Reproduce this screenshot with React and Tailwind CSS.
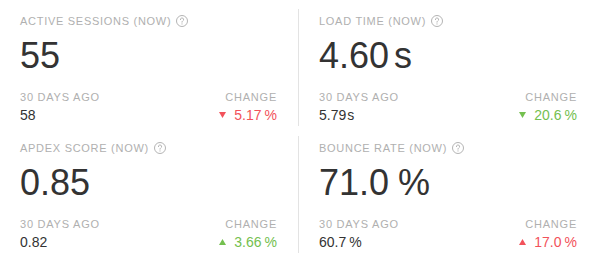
const metrics = [
  { label: 'Active Sessions (now)', value: '55', unit: null, prev: '58', prevUnit: null, change: '5.17', dir: 'down', good: false },
  { label: 'Load Time (now)', value: '4.60', unit: 's', prev: '5.79', prevUnit: 's', change: '20.6', dir: 'down', good: true },
  { label: 'Apdex Score (now)', value: '0.85', unit: null, prev: '0.82', prevUnit: null, change: '3.66', dir: 'up', good: true },
  { label: 'Bounce Rate (now)', value: '71.0', unit: '%', prev: '60.7', prevUnit: '%', change: '17.0', dir: 'up', good: false },
];

function HelpIcon() {
  return (
    <svg width="12" height="12" viewBox="0 0 12 12" fill="none" stroke="#b4b4b4" strokeWidth="1">
      <circle cx="6" cy="6" r="5.5" />
      <path d="M4.4 4.6a1.6 1.6 0 1 1 2.3 1.4c-.5.3-.7.6-.7 1.2" strokeLinecap="round" />
      <circle cx="6" cy="8.9" r="0.55" fill="#b4b4b4" stroke="none" />
    </svg>
  );
}

function Triangle({ dir, color }) {
  return (
    <svg width="7" height="6" viewBox="0 0 7 6" className="mr-[8px]">
      {dir === 'down'
        ? <polygon points="0,0 7,0 3.5,6" fill={color} />
        : <polygon points="0,6 7,6 3.5,0" fill={color} />}
    </svg>
  );
}

function MetricCell({ m, divider }) {
  const color = m.good ? '#74c04f' : '#f2525b';
  return (
    <div className={`flex flex-col pt-[5px] pl-5 pr-[21px] ${divider ? 'border-r border-[#e3e3e3]' : ''}`}>
      <div className="flex items-center gap-[5px] h-[14px]">
        <span className="text-[11px] leading-[14px] uppercase tracking-[0.065em] text-[#b0b0b0]">{m.label}</span>
        <HelpIcon />
      </div>
      <div className="mt-[8px] text-[36px] leading-[40px] text-[#333333]">
        {m.value}
        {m.unit && <span className={m.unit === '%' ? 'ml-[9px]' : 'ml-[5px]'}>{m.unit}</span>}
      </div>
      <div className="mt-[14px] flex justify-between">
        <div className="flex flex-col">
          <span className="text-[11px] leading-[14px] uppercase tracking-[0.07em] text-[#b0b0b0]">30 days ago</span>
          <span className="mt-[3px] text-[14px] leading-[16px] text-[#333333]">
            {m.prev}
            {m.prevUnit && <span className={m.prevUnit === '%' ? 'ml-[3px]' : 'ml-[1px]'}>{m.prevUnit}</span>}
          </span>
        </div>
        <div className="flex flex-col items-end">
          <span className="text-[11px] leading-[14px] uppercase tracking-[0.07em] text-[#b0b0b0]">Change</span>
          <span className="mt-[3px] flex items-center text-[14px] leading-[16px]" style={{ color }}>
            <Triangle dir={m.dir} color={color} />
            {m.change}
            <span className="ml-[3px]">%</span>
          </span>
        </div>
      </div>
    </div>
  );
}

export default function App() {
  return (
    <div className="w-[598px] h-[262px] bg-white py-[9px] grid grid-cols-2 grid-rows-[117px_117px] gap-y-[10px]" style={{ fontFamily: '"Liberation Sans", Arial, sans-serif' }}>
      {metrics.map((m, i) => (
        <MetricCell key={m.label} m={m} divider={i % 2 === 0} />
      ))}
    </div>
  );
}
